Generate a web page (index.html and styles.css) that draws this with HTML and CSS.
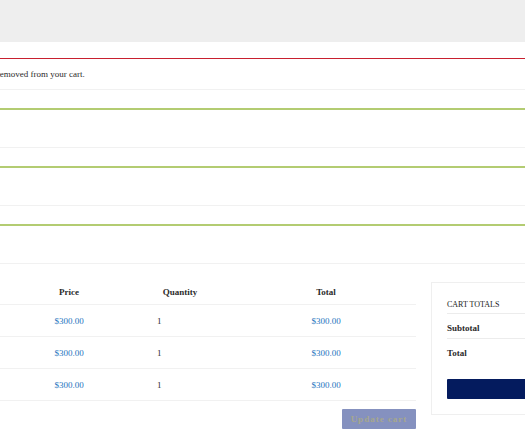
FILE: index.html
```html
<!DOCTYPE html>
<html lang="en">

<head>
	<meta charset="UTF-8">
	<meta name="viewport" content="width=device-width, initial-scale=1.0">
	<title>Cart</title>
	<link rel="stylesheet" href="styles.css">
</head>

<body>
	<header class="site-header"></header>
	<main class="page">
		<div class="notices">
			<div class="notice notice-error">“Classic Leather Jacket” removed from your cart.</div>
			<div class="notice notice-success"></div>
			<div class="notice notice-success"></div>
			<div class="notice notice-success"></div>
		</div>
		<div class="cart">
			<div class="cart-main">
				<table class="cart-table">
					<colgroup>
						<col class="c-remove">
						<col class="c-thumb">
						<col class="c-name">
						<col class="c-price">
						<col class="c-qty">
						<col class="c-total">
					</colgroup>
					<thead>
						<tr>
							<th></th>
							<th></th>
							<th>Product</th>
							<th>Price</th>
							<th>Quantity</th>
							<th>Total</th>
						</tr>
					</thead>
					<tbody>
						<tr>
							<td></td>
							<td></td>
							<td class="name">Classic Wool Coat</td>
							<td class="money">$300.00</td>
							<td class="qty">1</td>
							<td class="money">$300.00</td>
						</tr>
						<tr>
							<td></td>
							<td></td>
							<td class="name">Tailored Blazer</td>
							<td class="money">$300.00</td>
							<td class="qty">1</td>
							<td class="money">$300.00</td>
						</tr>
						<tr>
							<td></td>
							<td></td>
							<td class="name">Cashmere Sweater</td>
							<td class="money">$300.00</td>
							<td class="qty">1</td>
							<td class="money">$300.00</td>
						</tr>
					</tbody>
				</table>
				<div class="actions">
					<button class="btn-update" disabled>Update cart</button>
				</div>
			</div>
			<aside class="totals">
				<h2>Cart totals</h2>
				<div class="totals-row line"><b>Subtotal</b></div>
				<div class="totals-row"><b>Total</b></div>
				<button class="btn-checkout"></button>
			</aside>
		</div>
	</main>
</body>

</html>
```

FILE: styles.css
```css
body {
	margin: 0;
	overflow: hidden;
	background: #fff;
	color: #2b2b2b;
	font-family: "Liberation Serif", "Times New Roman", serif;
	font-size: 9px;
}

.site-header {
	height: 42px;
	background: #eeeeee;
}

/* page is scrolled sideways, left part is out of view */
.page {
	margin-left: -260px;
	width: 980px;
}

.notices {
	padding-top: 16px;
}
.notice {
	margin-bottom: 18px;
	border-bottom: 1px solid #f1f1f1;
	padding-left: 166px;
}
.notice-error {
	border-top: 1px solid #c8202f;
	height: 30px;
	line-height: 30px;
}
.notice-success {
	border-top: 2px solid #b3cc72;
	height: 37px;
}

.cart {
	display: flex;
	align-items: flex-start;
	gap: 15px;
	margin-top: -2px;
}
.cart-main {
	width: 676px;
}

.cart-table {
	width: 100%;
	border-collapse: collapse;
	table-layout: fixed;
}
.c-remove { width: 40px; }
.c-thumb { width: 80px; }
.c-name { width: 154px; }
.c-price { width: 110px; }
.c-qty { width: 112px; }
.c-total { width: 180px; }

.cart-table th {
	height: 24px;
	padding: 0;
	font-weight: bold;
	text-align: center;
	border-bottom: 1px solid #f1f1f1;
}
.cart-table td {
	height: 31px;
	padding: 0;
	border-bottom: 1px solid #f1f1f1;
}
.cart-table .money {
	text-align: center;
	color: #1e73be;
}
.cart-table .qty {
	padding-left: 33px;
}

.actions {
	display: flex;
	justify-content: flex-end;
	padding-top: 8px;
}
.btn-update {
	width: 74px;
	height: 20px;
	border: 0;
	border-radius: 1px;
	background: #8591bf;
	color: #a6a78e;
	font-family: inherit;
	font-size: 9px;
	font-weight: bold;
	letter-spacing: 1px;
	padding: 0;
}

.totals {
	width: 250px;
	margin-top: 2px;
	border: 1px solid #efefef;
	padding: 16px 15px 15px;
}
.totals h2 {
	margin: 0;
	font-size: 8px;
	font-weight: normal;
	text-transform: uppercase;
	line-height: 12px;
	padding-bottom: 2px;
	border-bottom: 1px solid #ececec;
	color: #222;
}
.totals-row {
	padding-top: 4px;
	line-height: 20px;
}
.totals-row.line {
	border-bottom: 1px solid #ececec;
}
.btn-checkout {
	display: block;
	width: 100%;
	height: 20px;
	margin-top: 16px;
	border: 0;
	border-radius: 1px;
	background: #041b5e;
}
```
